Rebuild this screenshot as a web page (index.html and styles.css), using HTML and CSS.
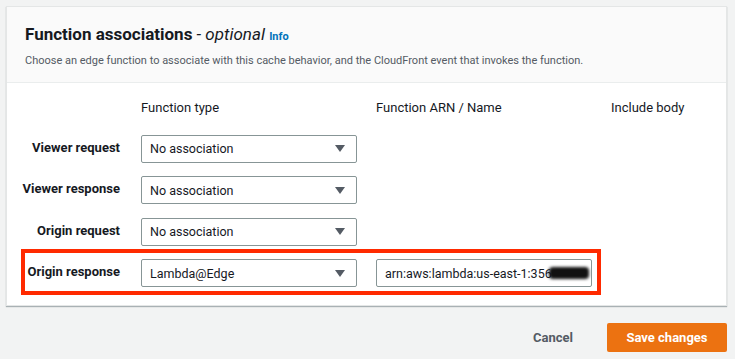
FILE: index.html
```html
<!DOCTYPE html>
<html lang="en">
<head>
<meta charset="utf-8">
<title>Function associations</title>
<link rel="stylesheet" href="styles.css">
</head>
<body>
<div class="page">
  <section class="panel">
    <header class="panel-header">
      <h2 class="title">Function associations <span class="optional">- optional</span> <a class="info" href="#">Info</a></h2>
      <p class="desc">Choose an edge function to associate with this cache behavior, and the CloudFront event that invokes the function.</p>
    </header>
    <div class="panel-body">
      <div class="row head-row">
        <span></span>
        <span class="col-head">Function type</span>
        <span class="col-head">Function ARN / Name</span>
        <span class="col-head">Include body</span>
      </div>
      <div class="row">
        <span class="label">Viewer request</span>
        <div class="select"><span>No association</span><span class="caret"></span></div>
      </div>
      <div class="row">
        <span class="label">Viewer response</span>
        <div class="select"><span>No association</span><span class="caret"></span></div>
      </div>
      <div class="row">
        <span class="label">Origin request</span>
        <div class="select"><span>No association</span><span class="caret"></span></div>
      </div>
      <div class="row highlight">
        <span class="label">Origin response</span>
        <div class="select"><span>Lambda@Edge</span><span class="caret"></span></div>
        <div class="input"><span>arn:aws:lambda:us-east-1:356</span><span class="redact"></span></div>
      </div>
    </div>
  </section>
  <div class="actions">
    <button class="btn-link">Cancel</button>
    <button class="btn-primary">Save changes</button>
  </div>
</div>
</body>
</html>
```

FILE: styles.css
```css
* { box-sizing: border-box; }
html, body { margin: 0; padding: 0; }
body {
  background: #f2f3f3;
  font-family: Roboto, "Open Sans", sans-serif;
  color: #16191f;
}
.page {
  width: 735px;
  height: 359px;
  padding: 6px 8px 0 6px;
}
.panel {
  background: #ffffff;
  border: 1px solid #e4e6e6;
  box-shadow: 0 1px 1px 0 rgba(0, 28, 36, 0.3);
  height: 300px;
}
.panel-header {
  background: #fafafa;
  border-bottom: 1px solid #eaeded;
  height: 76px;
  padding: 16px 18px 0 18px;
}
.title {
  margin: 0;
  font-size: 17px;
  line-height: 22px;
  font-weight: 700;
  white-space: nowrap;
}
.optional {
  font-style: italic;
  font-weight: 400;
}
.info {
  font-size: 11px;
  font-weight: 700;
  color: #0073bb;
  text-decoration: none;
}
.desc {
  margin: 5px 0 0 0;
  font-size: 11px;
  line-height: 16px;
  color: #545b64;
  white-space: nowrap;
}
.panel-body {
  padding: 16px 0 0 15px;
  display: flex;
  flex-direction: column;
  gap: 13.5px;
}
.row {
  display: grid;
  grid-template-columns: 100px 216px 216px auto;
  column-gap: 19px;
  align-items: center;
  height: 28px;
  position: relative;
  width: 570px;
}
.head-row {
  height: 18px;
  margin-bottom: 4px;
  width: auto;
}
.col-head {
  font-size: 13px;
  line-height: 18px;
  white-space: nowrap;
}
.label {
  font-size: 13px;
  font-weight: 700;
  text-align: right;
  white-space: nowrap;
  margin-top: -3px;
  margin-right: 2px;
}
.select, .input {
  height: 28px;
  border: 1px solid #879596;
  border-radius: 2px;
  background: #fff;
  display: flex;
  align-items: center;
  padding: 0 10px 0 8px;
  font-size: 12.5px;
  white-space: nowrap;
  overflow: hidden;
}
.select { justify-content: space-between; }
.caret {
  width: 0;
  height: 0;
  border-left: 5px solid transparent;
  border-right: 5px solid transparent;
  border-top: 7px solid #545b64;
  margin-right: 1px;
}
.input { padding-right: 2px; }
.redact {
  flex: 1;
  height: 12px;
  background: #111;
  filter: blur(1.5px);
  border-radius: 4px;
  margin-left: -3px;
}
.highlight::after {
  content: "";
  position: absolute;
  top: -10px;
  bottom: -8px;
  left: -1px;
  right: -9px;
  border: 4px solid #ff2a00;
  pointer-events: none;
}
.actions {
  display: flex;
  justify-content: flex-end;
  align-items: center;
  gap: 34px;
  margin-top: 17px;
}
.btn-link {
  background: none;
  border: none;
  padding: 0;
  font-family: inherit;
  font-size: 13px;
  font-weight: 700;
  color: #545b64;
}
.btn-primary {
  width: 120px;
  height: 29px;
  background: #ec7211;
  border: none;
  border-radius: 2px;
  color: #fff;
  font-family: inherit;
  font-size: 13px;
  font-weight: 700;
}
```
